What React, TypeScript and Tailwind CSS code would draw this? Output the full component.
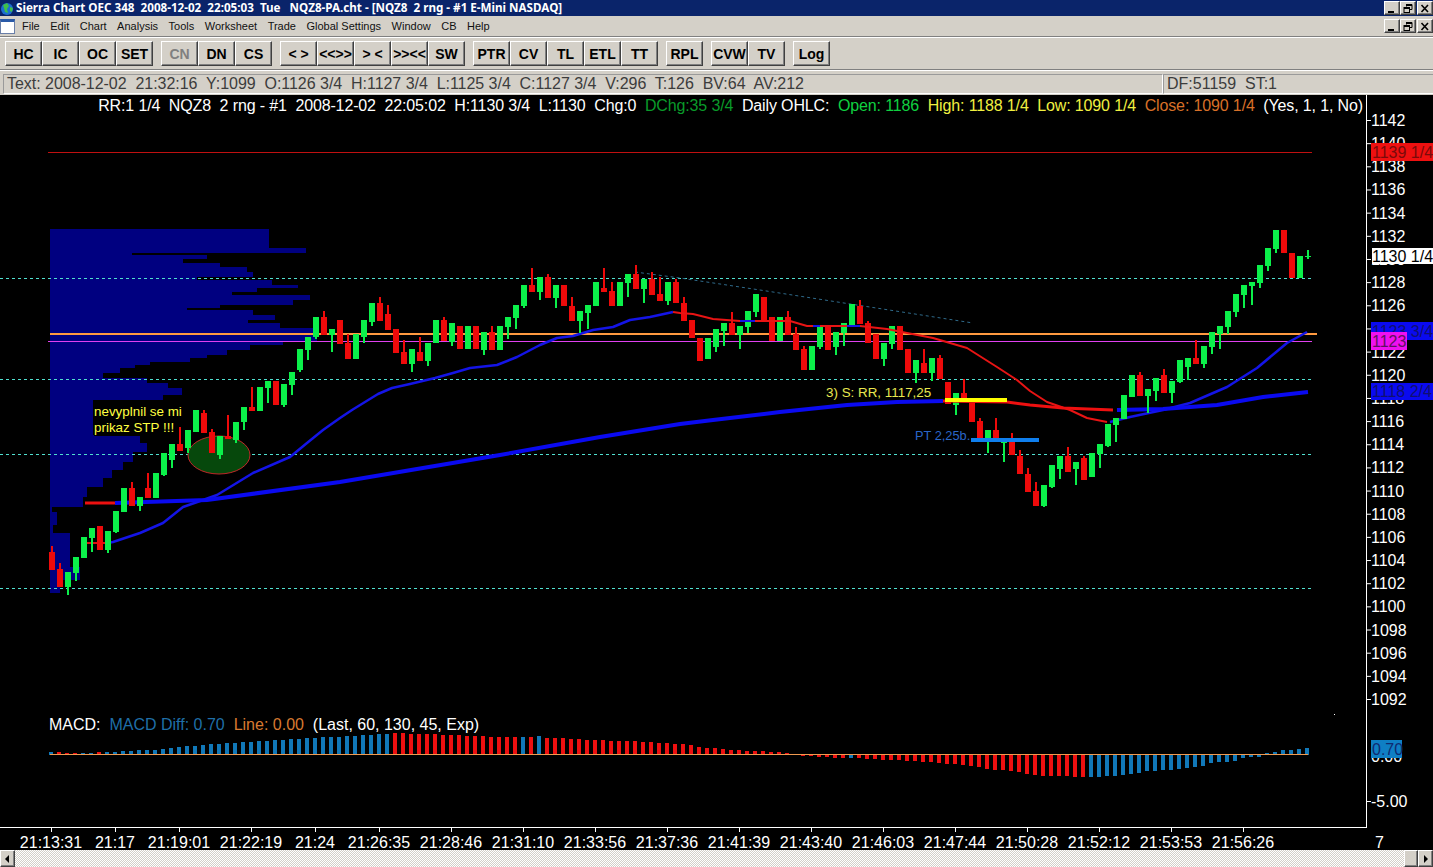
const FONT = "font-['Liberation_Sans',sans-serif]";

// [color, bodyTop, bodyBottom, wickTop, wickBottom], one per bar, 8px apart from x=52
type Candle = [string, number, number, number?, number?];
const candles: Candle[] = [
  ["r", 552, 570, 546], ["r", 569, 587, 563], ["g", 572, 587, 572, 595], ["g", 557, 573, 557, 581],
  ["g", 537, 558], ["g", 528, 538, 528, 552], ["r", 526, 550], ["g", 531, 550, 531, 553],
  ["g", 511, 532, 511, 533], ["g", 488, 512], ["r", 488, 506, 482], ["g", 497, 506, 497, 511],
  ["r", 488, 498, 473], ["g", 473, 498], ["g", 453, 475, 453, 476], ["g", 444, 460, 444, 468],
  ["r", 444, 451, 427], ["g", 430, 448, 430, 453], ["g", 410, 432], ["r", 413, 433, 410],
  ["r", 432, 453, 429], ["g", 436, 455, 436, 459], ["r", 436, 439, 415], ["g", 422, 440, 422, 443],
  ["g", 407, 422, 407, 430], ["r", 407, 411, 387], ["g", 387, 411], ["g", 381, 388, 381, 403],
  ["r", 381, 405], ["g", 384, 405, 384, 407], ["g", 372, 385, 372, 395], ["g", 349, 370, 349, 372],
  ["g", 337, 350, 337, 360], ["g", 317, 337, 317, 339], ["r", 317, 335, 311], ["g", 329, 335, 329, 352],
  ["r", 320, 344, 320], ["r", 343, 359, 334], ["g", 334, 359], ["g", 320, 337, 320, 343],
  ["g", 303, 322, 303, 326], ["r", 303, 321, 297], ["r", 314, 330, 305], ["r", 329, 353],
  ["r", 352, 364, 340], ["g", 349, 364, 349, 372], ["r", 352, 361, 337], ["g", 343, 361, 343, 366],
  ["g", 320, 343], ["r", 320, 341, 317], ["g", 323, 342, 323, 346], ["r", 326, 349],
  ["g", 326, 349], ["r", 326, 349], ["g", 332, 350, 332, 355], ["r", 332, 350, 326],
  ["g", 326, 350], ["g", 317, 327, 317, 339], ["g", 305, 318, 305, 329], ["g", 285, 306, 285, 308],
  ["r", 285, 292, 268], ["g", 277, 292, 277, 300], ["r", 277, 298, 274], ["g", 285, 298, 285, 308],
  ["r", 285, 306], ["r", 306, 321, 297], ["g", 311, 321, 311, 333], ["g", 305, 313, 305, 329],
  ["g", 282, 306], ["r", 288, 292, 268], ["r", 291, 306, 282], ["g", 282, 306],
  ["g", 274, 283, 274, 297], ["r", 274, 289, 265], ["g", 279, 289, 279, 303], ["r", 279, 295, 272],
  ["r", 294, 301, 277], ["g", 282, 301, 282, 305], ["r", 282, 303, 279], ["r", 303, 321, 297],
  ["r", 320, 338], ["r", 338, 361], ["g", 338, 359], ["g", 329, 347, 329, 352],
  ["g", 323, 331, 323, 346], ["r", 323, 335, 312], ["g", 326, 335, 326, 349], ["g", 311, 327, 311, 333],
  ["g", 294, 312, 294, 317], ["r", 297, 321], ["r", 317, 341], ["g", 317, 341],
  ["r", 317, 335, 311], ["r", 334, 350, 327], ["r", 349, 370, 346], ["g", 346, 370],
  ["g", 326, 347, 326, 349], ["r", 326, 350], ["g", 332, 347, 332, 355], ["g", 323, 333, 323, 346],
  ["g", 304, 325], ["r", 306, 324, 300], ["r", 323, 343, 321], ["r", 334, 359],
  ["g", 343, 359, 343, 366], ["g", 326, 344, 326, 349], ["r", 326, 350], ["r", 349, 373],
  ["g", 360, 373, 360, 383], ["r", 363, 373, 349], ["g", 358, 373, 358, 381], ["r", 358, 379, 355],
  ["r", 382, 404], ["g", 393, 405, 393, 415], ["r", 393, 401, 379], ["r", 403, 422],
  ["r", 421, 438, 418], ["g", 430, 438, 430, 453], ["r", 430, 438, 418], ["g", 438, 443, 438, 462],
  ["r", 438, 455, 433], ["r", 456, 474, 450], ["r", 474, 492, 468], ["r", 491, 506, 482],
  ["g", 485, 506, 485, 507], ["g", 465, 487, 465, 488], ["g", 456, 469, 456, 479], ["r", 456, 472, 447],
  ["g", 462, 469, 462, 485], ["r", 458, 480, 456], ["g", 453, 477], ["g", 444, 454, 444, 468],
  ["g", 424, 446, 424, 447], ["g", 418, 425, 418, 442], ["g", 395, 419], ["g", 375, 397, 375, 397],
  ["r", 375, 396, 372], ["g", 389, 396, 389, 413], ["g", 378, 391, 378, 401], ["r", 375, 393, 369],
  ["g", 381, 393, 381, 403], ["g", 360, 382, 360, 383], ["g", 358, 367, 358, 380], ["r", 358, 364, 340],
  ["g", 346, 364, 346, 368], ["g", 332, 347, 332, 354], ["g", 326, 334, 326, 349], ["g", 311, 327, 311, 334],
  ["g", 294, 312, 294, 317], ["g", 285, 295, 285, 308], ["g", 282, 286, 282, 305], ["g", 265, 283, 265, 288],
  ["g", 248, 266, 248, 271], ["g", 230, 249, 230, 253], ["r", 230, 253], ["r", 253, 278],
  ["g", 256, 278],
];

// volume profile rows: [top, bottom, right edge x]
const profile: [number, number, number][] = [
  [229, 248, 269], [248, 253, 306], [253, 255, 132], [255, 259, 207], [259, 263, 183], [263, 267, 220],
  [267, 272, 247], [272, 277, 253], [277, 280, 197], [280, 285, 272], [285, 288, 298], [288, 292, 257],
  [292, 295, 232], [295, 300, 310], [300, 305, 293], [305, 308, 220], [308, 310, 187], [310, 315, 253],
  [315, 320, 275], [320, 323, 248], [323, 328, 280], [328, 342, 317], [342, 345, 283], [345, 350, 250],
  [350, 355, 227], [355, 358, 207], [358, 362, 190], [362, 365, 150], [365, 368, 135], [368, 373, 120],
  [373, 378, 103], [378, 383, 147], [383, 388, 168], [388, 395, 182], [395, 400, 163], [400, 435, 93],
  [435, 443, 140], [443, 452, 147], [452, 462, 133], [462, 470, 123], [470, 478, 112], [478, 487, 103],
  [487, 497, 87], [497, 507, 83], [507, 512, 52], [512, 525, 57], [525, 533, 53], [533, 567, 70],
  [567, 580, 80], [580, 593, 60],
];

// histogram heights, positive above the zero line
const macd: [number, string][] = [
  ...[3, 3, 2, 2, 2, 2, 3, 3, 3].map((h, i) => [h, i === 1 || i === 2 || i === 3 || i === 6 ? "r" : "b"] as [number, string]),
  ...[4, 4, 5, 5, 5, 6, 7, 8, 9, 9, 10, 11, 11, 12, 12, 13, 13, 14, 14, 15, 15, 16, 16, 17, 17, 18, 18, 18, 19, 19, 20, 20, 21, 21].map((h) => [h, "b"] as [number, string]),
  ...[22, 22, 21, 21, 21, 21, 20, 20, 20, 19, 19, 19, 18, 18, 18, 18].map((h) => [h, "r"] as [number, string]),
  [18, "b"], [18, "r"], [19, "b"],
  ...[17, 17, 17, 16, 16, 15, 15, 15, 14, 14, 14, 14, 13, 13, 12, 12, 11, 11, 10, 8, 7, 7, 6, 5, 5, 4, 4, 4, 3, 3, 2, 1, -1, -1, -2, -2, -3, -3].map((h) => [h, "r"] as [number, string]),
  [-3, "b"],
  ...[-3, -4, -4, -5, -5, -5, -6, -6, -7, -7, -8, -9, -9, -10, -11, -12, -14, -15, -15, -16, -17, -19, -20, -21, -21, -21, -21, -22, -22].map((h) => [h, "r"] as [number, string]),
  ...[-22, -22, -21, -21, -20, -19, -18, -16, -16, -15, -15, -14, -13, -12, -11, -8, -7, -7, -6, -3, -2, -2, 2, 3, 5, 5, 6, 7].map((h) => [h, "b"] as [number, string]),
];

const times: [string, number][] = [
  ["21:13:31", 51], ["21:17", 115], ["21:19:01", 179], ["21:22:19", 251], ["21:24", 315], ["21:26:35", 379],
  ["21:28:46", 451], ["21:31:10", 523], ["21:33:56", 595], ["21:37:36", 667], ["21:41:39", 739], ["21:43:40", 811],
  ["21:46:03", 883], ["21:47:44", 955], ["21:50:28", 1027], ["21:52:12", 1099], ["21:53:53", 1171], ["21:56:26", 1243],
];

const toolbar = [
  ["HC", "IC", "OC", "SET"],
  ["CN", "DN", "CS"],
  ["< >", "<<>>", "> <", ">><<", "SW"],
  ["PTR", "CV", "TL", "ETL", "TT"],
  ["RPL"],
  ["CVW", "TV"],
  ["Log"],
];

const menu = ["File", "Edit", "Chart", "Analysis", "Tools", "Worksheet", "Trade", "Global Settings", "Window", "CB", "Help"];

const pts = (p: number[][]) => p.map((q) => q.join(",")).join(" ");

const axisY = (v: number) => 120 + ((1142 - v) / 2) * 23.16;

const raised = "border border-t-white border-l-white border-r-[#404040] border-b-[#404040] shadow-[inset_-1px_-1px_0_#808080]";

const WinButton = ({ kind }: { kind: "min" | "max" | "close" }) => (
  <div className={`w-4 h-[14px] bg-[#d4d0c8] flex items-center justify-center ${raised}`}>
    <svg width="10" height="9" viewBox="0 0 10 9">
      {kind === "min" && <rect x="1" y="7" width="6" height="2" fill="#000" />}
      {kind === "max" && (
        <g fill="none" stroke="#000">
          <path d="M3.5 2.5V.5h5.5v5H7" />
          <path d="M3 1h6" strokeWidth="2" />
          <rect x="1" y="3.5" width="5.5" height="5" />
          <path d="M1 4h6" strokeWidth="2" />
        </g>
      )}
      {kind === "close" && <path d="M1.5 1l6.5 7M8 1l-6.5 7" stroke="#000" strokeWidth="1.6" fill="none" />}
    </svg>
  </div>
);

const WinButtons = () => (
  <div className="ml-auto flex items-center">
    <WinButton kind="min" />
    <WinButton kind="max" />
    <div className="w-px" />
    <WinButton kind="close" />
  </div>
);

const App = () => {
  return (
    <div className={`h-[867px] w-full overflow-hidden flex flex-col bg-[#d4d0c8] ${FONT}`}>
      {/* Title bar */}
      <div className="h-4 shrink-0 bg-[#0a246a] flex items-center text-white">
        <svg width="15" height="15" viewBox="0 0 15 15" className="shrink-0">
          <circle cx="7" cy="8" r="6" fill="#1c6fd0" />
          <path d="M3 4l4-2 2 3-2 3 1 4-3-1-1-4z" fill="#3fbf4a" />
          <path d="M10 6l3 1-1 4-2-1z" fill="#3fbf4a" />
        </svg>
        <span className="ml-px text-[11.65px] font-bold whitespace-pre font-['Noto_Sans',sans-serif]">
          {"Sierra Chart OEC 348  2008-12-02  22:05:03  Tue   NQZ8-PA.cht - [NQZ8  2 rng - #1 E-Mini NASDAQ]"}
        </span>
        <WinButtons />
      </div>

      {/* Menu bar */}
      <div className="h-[21px] shrink-0 flex items-center border-b border-[#808080] text-[11px] text-[#111]">
        <div className="w-[15px] h-[15px] shrink-0 bg-white border border-[#6a7fa8] border-t-[3px] border-t-[#2a5aa8]" />
        <div className="ml-[7px] flex gap-[10.5px]">
          {menu.map((m) => (
            <span key={m}>{m}</span>
          ))}
        </div>
        <WinButtons />
      </div>

      {/* Toolbar */}
      <div className="h-[33px] shrink-0 flex items-center gap-2 pl-[5px] border-t border-white border-b border-b-[#808080]">
        {toolbar.map((group, g) => (
          <div key={g} className="flex">
            {group.map((b) => (
              <div
                key={b}
                className={`w-[37px] h-[25px] flex items-center justify-center text-sm font-bold whitespace-pre ${raised} ${b === "CN" ? "text-[#808080]" : "text-black"}`}
              >
                {b}
              </div>
            ))}
          </div>
        ))}
      </div>

      {/* Status row */}
      <div className="h-[25px] shrink-0 flex items-stretch border-t border-white pl-[3px] pt-[3px] pb-px text-base text-[#3c3c3c] whitespace-pre">
        <div className="w-[1160px] pl-[3px] flex items-center border border-[#9a9a9a] border-r-white border-b-white tracking-[-0.03px]">
          {"Text: 2008-12-02  21:32:16  Y:1099  O:1126 3/4  H:1127 3/4  L:1125 3/4  C:1127 3/4  V:296  T:126  BV:64  AV:212"}
        </div>
        <div className="flex-1 pl-[3px] flex items-center border border-[#9a9a9a] border-r-0 border-b-white">
          {"DF:51159  ST:1"}
        </div>
      </div>

      {/* Chart */}
      <div className="relative flex-1 min-h-0 bg-black">
        <svg viewBox="0 95 1433 755" className="block w-full h-full text-base">
          {/* volume profile */}
          {profile.map(([t, b, r]) => (
            <rect key={t} x="50" y={t} width={r - 50} height={b - t} fill="#000080" />
          ))}
          <rect x="94" y="404" width="90" height="32" fill="#000" />

          {/* study levels */}
          <rect x="48" y="152" width="1264" height="1" fill="#c01010" />
          {[278, 379, 454, 588].map((y) => (
            <line key={y} x1="0" x2="1312" y1={y + 0.5} y2={y + 0.5} stroke="#50e0d0" strokeDasharray="3 3" />
          ))}
          <ellipse cx="219" cy="455" rx="31" ry="19" fill="#06480c" stroke="#c02828" />
          <rect x="50" y="333" width="1267" height="2" fill="#ff9a40" />
          <rect x="48" y="341" width="1264" height="1" fill="#e040f0" />
          <polyline
            points="635,272 680,278 760,290 973,323"
            fill="none"
            stroke="#2f6a8a"
            strokeDasharray="3 3"
          />

          {/* thin average under the candles */}
          <polyline
            points={pts([[107, 543], [113, 542], [140, 533], [163, 523], [183, 507], [203, 500], [217, 495], [253, 473], [290, 457], [307, 443], [323, 430], [340, 418], [352, 410], [365, 402], [378, 394], [392, 388], [410, 384], [435, 378], [453, 373], [470, 368], [497, 365], [517, 357], [540, 345], [557, 338], [573, 336], [593, 330], [613, 327], [630, 320], [650, 317], [673, 312]])}
            fill="none"
            stroke="#1414e6"
            strokeWidth="2.5"
            strokeLinejoin="round"
          />
          <polyline points={pts([[84, 543], [107, 543]])} fill="none" stroke="#e01010" strokeWidth="2" />
          <polyline
            points={pts([[1110, 422], [1130, 417], [1163, 410], [1190, 403], [1227, 387], [1257, 368], [1287, 343], [1307, 332]])}
            fill="none"
            stroke="#1414e6"
            strokeWidth="2.5"
            strokeLinejoin="round"
          />

          {/* thick average under the candles */}
          <polyline points={pts([[85, 503], [115, 503]])} fill="none" stroke="#ee1010" strokeWidth="3" />
          <polyline
            points={pts([[115, 503], [207, 500], [340, 482], [500, 455], [600, 437], [680, 424], [713, 420], [780, 412], [847, 405], [897, 402], [943, 401]])}
            fill="none"
            stroke="#0a0af0"
            strokeWidth="4"
          />
          <polyline points={pts([[1117, 410], [1163, 409], [1217, 405], [1263, 397], [1308, 392]])} fill="none" stroke="#0a0af0" strokeWidth="4" />

          {/* candles */}
          {candles.map(([c, top, bottom, wt, wb], i) => {
            const x = 52 + i * 8;
            const fill = c === "g" ? "#0bf04a" : "#ee0a0a";
            const wickTop = wt ?? top;
            const wickBottom = wb ?? bottom;
            return (
              <g key={i} fill={fill}>
                <rect x={x - 1} y={wickTop} width="2" height={wickBottom - wickTop} />
                <rect x={x - 3} y={top} width="6" height={bottom - top} />
              </g>
            );
          })}
          <g fill="#0bf04a">
            <rect x="1307" y="250" width="2" height="9" />
            <rect x="1305" y="256" width="6" height="1" />
          </g>

          {/* red averages over the candles */}
          <polyline
            points={pts([[673, 312], [680, 313], [693, 314], [713, 319], [740, 321], [790, 321], [807, 326], [860, 326], [887, 329], [907, 333], [933, 338], [967, 348], [997, 367], [1017, 380], [1030, 391], [1047, 402], [1070, 410], [1087, 418], [1107, 422]])}
            fill="none"
            stroke="#e81414"
            strokeWidth="2"
            strokeLinejoin="round"
          />
          <g fill="#1414e6">
            <rect x="740" y="320" width="15" height="2" />
            <rect x="813" y="325" width="7" height="2" />
            <rect x="847" y="325" width="13" height="2" />
          </g>
          <polyline points={pts([[943, 401], [1007, 402], [1030, 405], [1063, 408], [1113, 410]])} fill="none" stroke="#ee1010" strokeWidth="3" />
          <rect x="945" y="398" width="62" height="4" fill="#ffff00" />
          <rect x="971" y="438" width="68" height="4" fill="#0f7fee" />

          {/* chart notes */}
          <g className="text-[13.4px]">
            <text x="94" y="416" fill="#ffff40">nevyplnil se mi</text>
            <text x="94" y="432" fill="#ffff40">prikaz STP !!!</text>
            <text x="826" y="397" fill="#e8e850">3) S: RR, 1117,25</text>
            <text x="915" y="440" fill="#2a66c8" className="text-[12.8px]">PT 2,25b.</text>
          </g>

          {/* MACD */}
          {macd.map(([h, c], i) => (
            <rect
              key={i}
              x={49 + i * 8}
              y={h > 0 ? 755 - h : 755}
              width="4"
              height={Math.abs(h)}
              fill={c === "r" ? "#ee1010" : "#1178b8"}
            />
          ))}
          <rect x="50" y="754" width="1258" height="1" fill="#f09a50" />
          <text x="49" y="730" className="whitespace-pre" fill="#fff">
            {"MACD:  "}
            <tspan fill="#1f6fa8">{"MACD Diff: 0.70  "}</tspan>
            <tspan fill="#d87a30">{"Line: 0.00  "}</tspan>
            {"(Last, 60, 130, 45, Exp)"}
          </text>
          <rect x="1334" y="714" width="1" height="1" fill="#fff" />

          {/* axes */}
          <rect x="1366" y="95" width="1" height="733" fill="#fff" />
          <rect x="0" y="827" width="1367" height="1" fill="#fff" />
          {Array.from({ length: 26 }, (_, i) => 1142 - i * 2).map((v) => (
            <g key={v}>
              <rect x="1367" y={axisY(v)} width="4" height="1" fill="#fff" />
              <text x="1371" y={axisY(v) + 6} fill="#fff">{v}</text>
            </g>
          ))}
          <text x="1371" y="762" fill="#fff">0.00</text>
          <rect x="1367" y="801" width="4" height="1" fill="#fff" />
          <text x="1371" y="807" fill="#fff">-5.00</text>
          <text x="1375" y="848" fill="#fff">7</text>
          {times.map(([t, x]) => (
            <g key={t}>
              <rect x={x} y="828" width="1" height="4" fill="#fff" />
              <text x={x} y="848" textAnchor="middle" fill="#fff">{t}</text>
            </g>
          ))}

          {/* price tags */}
          <rect x="1371" y="143" width="62" height="18" fill="#ee1010" />
          <text x="1372" y="158" fill="#7a0a0a">1139 1/4</text>
          <rect x="1372" y="248" width="61" height="16" fill="#fff" />
          <text x="1372" y="262" fill="#000">1130 1/4</text>
          <rect x="1371" y="322" width="62" height="18" fill="#0a0af0" />
          <text x="1372" y="337" fill="#101070">1123 3/4</text>
          <rect x="1371" y="383" width="62" height="17" fill="#0a0af0" />
          <text x="1372" y="397" fill="#101070">1118 2/4</text>
          <rect x="1371" y="332" width="36" height="18" fill="#f010f0" />
          <text x="1372" y="347" fill="#601060">1123</text>
          <rect x="1371" y="740" width="31" height="18" fill="#0f7fc4" />
          <text x="1372" y="755" fill="#102a70">0.70</text>
        </svg>

        {/* Study header line */}
        <div className="absolute top-0 right-[70px] h-[21px] flex items-center text-base whitespace-pre text-white tracking-[-0.135px]">
          {"RR:1 1/4  NQZ8  2 rng - #1  2008-12-02  22:05:02  H:1130 3/4  L:1130  Chg:0  "}
          <span className="text-[#0a9a2a]">{"DChg:35 3/4  "}</span>
          {"Daily OHLC:  "}
          <span className="text-[#10d040]">{"Open: 1186  "}</span>
          <span className="text-[#f0f040]">{"High: 1188 1/4  Low: 1090 1/4  "}</span>
          <span className="text-[#d87028]">{"Close: 1090 1/4  "}</span>
          {"(Yes, 1, 1, No)"}
        </div>
      </div>

      {/* Scrollbar */}
      <div className="h-[17px] shrink-0 flex bg-[repeating-conic-gradient(#d4d0c8_0_25%,#ffffff_0_50%)] bg-[length:2px_2px]">
        <div className={`w-[15px] bg-[#d4d0c8] flex items-center justify-center ${raised}`}>
          <svg width="5" height="8" viewBox="0 0 5 8">
            <path d="M4 0v8L0 4z" fill="#000" />
          </svg>
        </div>
        <div className={`ml-auto w-[14px] bg-[#d4d0c8] ${raised}`} />
        <div className={`w-[15px] bg-[#d4d0c8] flex items-center justify-center ${raised}`}>
          <svg width="5" height="8" viewBox="0 0 5 8">
            <path d="M1 0v8l4-4z" fill="#000" />
          </svg>
        </div>
      </div>
    </div>
  );
};

export default App;
